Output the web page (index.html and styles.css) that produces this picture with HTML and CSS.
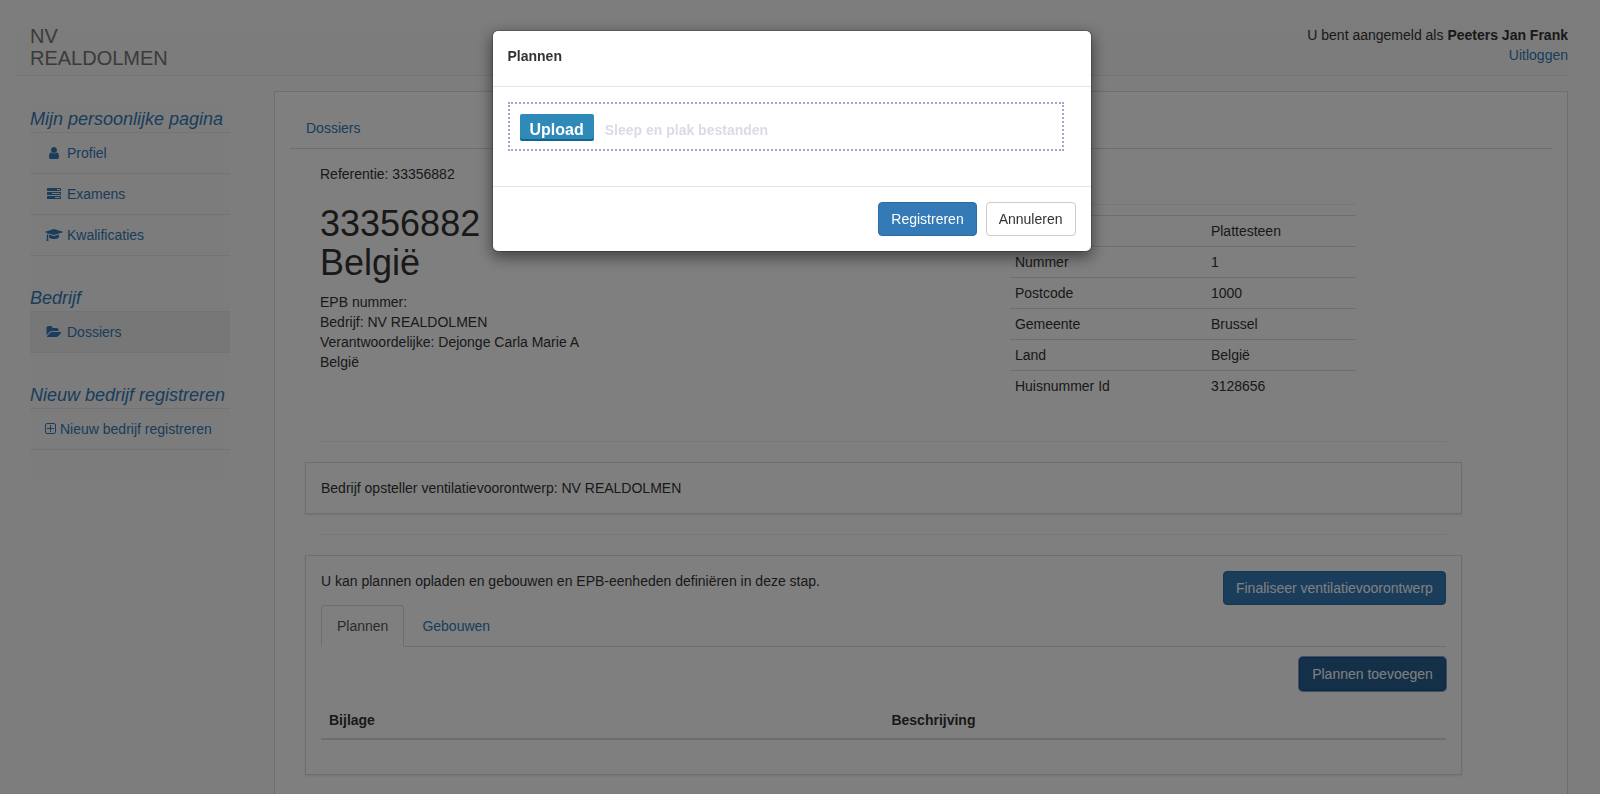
FILE: index.html
```html
<!DOCTYPE html>
<html lang="nl">
<head>
<meta charset="utf-8">
<meta name="viewport" content="width=device-width, initial-scale=1">
<title>Dossier 33356882</title>
<link rel="stylesheet" href="styles.css">
</head>
<body>
<div class="page">
  <header class="topbar">
    <div class="brand">NV<br>REALDOLMEN</div>
    <div class="account">
      <div>U bent aangemeld als <strong>Peeters Jan Frank</strong></div>
      <a href="#">Uitloggen</a>
    </div>
  </header>

  <div class="layout">
    <nav class="sidebar">
      <section class="menu">
        <h4 class="menu-title">Mijn persoonlijke pagina</h4>
        <ul class="menu-list">
          <li><a href="#"><svg class="icon" viewBox="0 0 1536 1792"><path d="M1408 1399q0 109-62.5 187t-150.5 78h-854q-88 0-150.5-78t-62.5-187q0-85 8.5-160.5t31.5-152 58.5-131 94-89 134.5-34.5q131 128 313 128t313-128q76 0 134.5 34.5t94 89 58.5 131 31.5 152 8.5 160.5zm-256-887q0 159-112.5 271.5t-271.5 112.5-271.5-112.5-112.5-271.5 112.5-271.5 271.5-112.5 271.5 112.5 112.5 271.5z"/></svg>Profiel</a></li>
          <li><a href="#"><svg class="icon" viewBox="0 0 1792 1792"><path d="M1024 1408h640v-128h-640v128zm-384-512h1024v-128h-1024v128zm640-512h384v-128h-384v128zm512 832v256q0 26-19 45t-45 19h-1664q-26 0-45-19t-19-45v-256q0-26 19-45t45-19h1664q26 0 45 19t19 45zm0-512v256q0 26-19 45t-45 19h-1664q-26 0-45-19t-19-45v-256q0-26 19-45t45-19h1664q26 0 45 19t19 45zm0-512v256q0 26-19 45t-45 19h-1664q-26 0-45-19t-19-45v-256q0-26 19-45t45-19h1664q26 0 45 19t19 45z"/></svg>Examens</a></li>
          <li><a href="#"><svg class="icon" viewBox="0 0 2304 1792"><path d="M1774 836l18 316q4 69-82 128t-235 93.5-323 34.5-323-34.5-235-93.5-82-128l18-316 574 181q22 7 48 7t48-7zm530-324q0 23-22 31l-1120 352q-4 1-10 1t-10-1l-652-206q-43 34-71 111.5t-34 178.5q63 36 63 109 0 69-58 107l58 433q2 14-8 25-9 11-24 11h-192q-15 0-24-11-10-11-8-25l58-433q-58-38-58-107 0-73 65-111 11-207 98-330l-333-104q-22-8-22-31t22-31l1120-352q4-1 10-1t10 1l1120 352q22 8 22 31z"/></svg>Kwalificaties</a></li>
        </ul>
      </section>
      <section class="menu">
        <h4 class="menu-title">Bedrijf</h4>
        <ul class="menu-list">
          <li><a class="active" href="#"><svg class="icon" viewBox="0 0 1920 1792"><path d="M1879 952q0 31-31 66l-336 396q-43 51-120.5 86.5t-143.5 35.5h-1088q-34 0-60.5-13t-26.5-43q0-31 31-66l336-396q43-51 120.5-86.5t143.5-35.5h1088q34 0 60.5 13t26.5 43zm-343-344v160h-832q-94 0-197 47.5t-164 119.5l-337 396-5 6q0-4-.5-12.5t-.5-12.5v-960q0-92 66-158t158-66h320q92 0 158 66t66 158v32h544q92 0 158 66t66 158z"/></svg>Dossiers</a></li>
        </ul>
      </section>
      <section class="menu">
        <h4 class="menu-title">Nieuw bedrijf registreren</h4>
        <ul class="menu-list">
          <li><a href="#"><svg class="icon icon-narrow" viewBox="192 0 1408 1792"><path d="M1344 800v64q0 14-9 23t-23 9h-352v352q0 14-9 23t-23 9h-64q-14 0-23-9t-9-23v-352h-352q-14 0-23-9t-9-23v-64q0-14 9-23t23-9h352v-352q0-14 9-23t23-9h64q14 0 23 9t9 23v352h352q14 0 23 9t9 23zm128 448v-832q0-66-47-113t-113-47h-832q-66 0-113 47t-47 113v832q0 66 47 113t113 47h832q66 0 113-47t47-113zm128-832v832q0 119-84.5 203.5t-203.5 84.5h-832q-119 0-203.5-84.5t-84.5-203.5v-832q0-119 84.5-203.5t203.5-84.5h832q119 0 203.5 84.5t84.5 203.5z"/></svg>Nieuw bedrijf registreren</a></li>
        </ul>
      </section>
    </nav>

    <main class="content">
      <div class="tabs">
        <a class="tab" href="#">Dossiers</a>
      </div>
      <div class="dossier">
        <div class="inset summary">
          <div>
            <p class="reference">Referentie: 33356882</p>
            <h1 class="title">33356882<br>België</h1>
            <p class="details">EPB nummer:<br>Bedrijf: NV REALDOLMEN<br>Verantwoordelijke: Dejonge Carla Marie A<br>België</p>
          </div>
          <div class="address">
            <table class="address-table">
              <tr><td></td><td>Plattesteen</td></tr>
              <tr><td>Nummer</td><td>1</td></tr>
              <tr><td>Postcode</td><td>1000</td></tr>
              <tr><td>Gemeente</td><td>Brussel</td></tr>
              <tr><td>Land</td><td>België</td></tr>
              <tr><td>Huisnummer Id</td><td>3128656</td></tr>
            </table>
          </div>
        </div>
        <hr class="rule">
        <section class="panel">Bedrijf opsteller ventilatievoorontwerp: NV REALDOLMEN</section>
        <hr class="rule">
        <section class="panel">
          <div class="step">
            <span>U kan plannen opladen en gebouwen en EPB-eenheden definiëren in deze stap.</span>
            <button class="btn btn-primary" type="button">Finaliseer ventilatievoorontwerp</button>
          </div>
          <div class="tabs">
            <a class="tab tab-active" href="#">Plannen</a>
            <a class="tab" href="#">Gebouwen</a>
          </div>
          <div class="actions">
            <button class="btn btn-primary btn-pressed" type="button">Plannen toevoegen</button>
          </div>
          <table class="plans">
            <thead><tr><th>Bijlage</th><th>Beschrijving</th></tr></thead>
          </table>
        </section>
      </div>
    </main>
  </div>
</div>

<div class="backdrop">
  <div class="modal" role="dialog" aria-labelledby="modal-title">
    <div class="modal-header"><h2 class="modal-title" id="modal-title">Plannen</h2></div>
    <div class="modal-body">
      <div class="dropzone">
        <button class="upload" type="button">Upload</button>
        <span class="hint">Sleep en plak bestanden</span>
      </div>
    </div>
    <div class="modal-footer">
      <button class="btn btn-primary" type="button">Registreren</button>
      <button class="btn btn-default" type="button">Annuleren</button>
    </div>
  </div>
</div>
</body>
</html>
```

FILE: styles.css
```css
* {
  box-sizing: border-box;
}

body {
  margin: 0;
  padding-right: 17px;
  overflow: hidden;
  background: #fbfbfb;
  color: #333;
  font: 14px/20px "Liberation Sans", Arial, sans-serif;
}

a {
  color: #337ab7;
  text-decoration: none;
}

p,
h1,
h2,
h4,
ul {
  margin: 0;
  padding: 0;
}

.page {
  display: flex;
  flex-direction: column;
  height: 100vh;
  padding: 25px 15px 0;
}

.topbar {
  display: flex;
  justify-content: space-between;
  min-height: 51px;
  padding-left: 15px;
  background: #f8f8f8;
  border-bottom: 1px solid #e7e7e7;
}

.brand {
  color: #777;
  font-size: 20px;
  line-height: 22px;
}

.account {
  text-align: right;
}

.layout {
  display: flex;
  flex: 1;
  align-items: flex-start;
  gap: 44px;
  padding: 15px 0 0 15px;
}

/* Sidebar */

.sidebar {
  flex: none;
  width: 200px;
  margin-top: 7px;
  padding-bottom: 10px;
  background: #f8f8f8;
}

.menu {
  margin-bottom: 21px;
}

.menu-title {
  padding: 11px 0 3px;
  color: #337ab7;
  font-size: 18px;
  font-style: italic;
  font-weight: 400;
  line-height: 20px;
  white-space: nowrap;
}

.menu-list {
  border-top: 1px solid #e7e7e7;
  list-style: none;
}

.menu-list li {
  border-bottom: 1px solid #e7e7e7;
}

.menu-list a {
  display: flex;
  align-items: center;
  gap: 4px;
  padding: 10px 15px;
  white-space: nowrap;
}

.menu-list .active {
  background: #eee;
}

.icon {
  flex: none;
  width: 18px;
  height: 14px;
  fill: currentColor;
}

.icon-narrow {
  width: 11px;
}

/* Dossier */

.content {
  flex: 1;
  align-self: stretch;
  min-width: 0;
  padding: 15px;
  background: #fff;
  border: 1px solid #ddd;
  border-bottom: 0;
}

.tabs {
  display: flex;
  gap: 2px;
  border-bottom: 1px solid #ddd;
}

.tab {
  margin-bottom: -1px;
  padding: 10px 15px;
  border: 1px solid transparent;
  border-radius: 4px 4px 0 0;
}

.tab-active {
  background: #fff;
  border-color: #ddd #ddd #fff;
  color: #555;
}

.dossier {
  width: 91.6667%;
  margin-left: 15px;
  padding-top: 15px;
}

.inset {
  margin: 0 15px;
}

.summary {
  display: grid;
  grid-template-columns: 690fr 346fr 91fr;
  min-height: 257px;
}

.title {
  margin: 20px 0 10px;
  color: #333;
  font-size: 36px;
  font-weight: 400;
  line-height: 39px;
}

.address {
  margin-top: 40px;
  padding-top: 10px;
  border-top: 1px solid #eee;
}

.address-table {
  width: 100%;
  border-collapse: collapse;
  table-layout: fixed;
}

.address-table td {
  padding: 5px;
  border-top: 1px solid #ddd;
}

.address-table td:first-child {
  width: 196px;
}

.rule {
  margin: 20px 15px;
  border: 0;
  border-top: 1px solid #eee;
}

.panel {
  padding: 15px;
  background: #fff;
  border: 1px solid #ddd;
  box-shadow: 0 1px 2px rgba(0, 0, 0, 0.1);
}

.step {
  display: flex;
  align-items: flex-start;
  justify-content: space-between;
}

.actions {
  display: flex;
  justify-content: flex-end;
  padding: 10px 0 11px;
}

.plans {
  width: 100%;
  margin-bottom: 19px;
  border-collapse: collapse;
}

.plans th {
  width: 50%;
  padding: 8px;
  border-bottom: 2px solid #ddd;
  text-align: left;
}

/* Buttons */

.btn {
  padding: 6px 12px;
  border: 1px solid transparent;
  border-radius: 4px;
  font: inherit;
  cursor: pointer;
}

.btn-primary {
  background: #337ab7;
  border-color: #2e6da4;
  color: #fff;
}

.btn-default {
  background: #fff;
  border-color: #ccc;
  color: #333;
}

.btn-pressed {
  background: #286090;
  border-color: #204d74;
  box-shadow: 0 0 0 1px #7c9fe0;
}

/* Modal */

.backdrop {
  position: fixed;
  inset: 0;
  padding: 30px 17px 0 0;
  background: rgba(0, 0, 0, 0.5);
}

.modal {
  max-width: 600px;
  margin: 0 auto;
  background: #fff;
  background-clip: padding-box;
  border: 1px solid rgba(0, 0, 0, 0.2);
  border-radius: 6px;
  box-shadow: 0 5px 15px rgba(0, 0, 0, 0.5);
}

.modal-header {
  padding: 15px 15px 20px;
  border-bottom: 1px solid #e5e5e5;
}

.modal-title {
  font-size: 14px;
  font-weight: 700;
  line-height: 20px;
}

.modal-body {
  padding: 15px 15px 35px;
}

.dropzone {
  display: flex;
  align-items: baseline;
  gap: 11px;
  width: 98%;
  padding: 10px;
  border: 2px dotted #a5a5c7;
}

.upload {
  padding: 7px 10px 0;
  background: #2f8ab9;
  border: 0;
  border-radius: 2px;
  box-shadow: 0 2px 0 #13648d;
  color: #fff;
  font: 700 16px/18px "Liberation Sans", Arial, sans-serif;
  cursor: pointer;
}

.hint {
  color: #dadce3;
  font-weight: 700;
  line-height: 16px;
}

.modal-footer {
  display: flex;
  justify-content: flex-end;
  gap: 9px;
  padding: 15px;
  border-top: 1px solid #e5e5e5;
}
```
